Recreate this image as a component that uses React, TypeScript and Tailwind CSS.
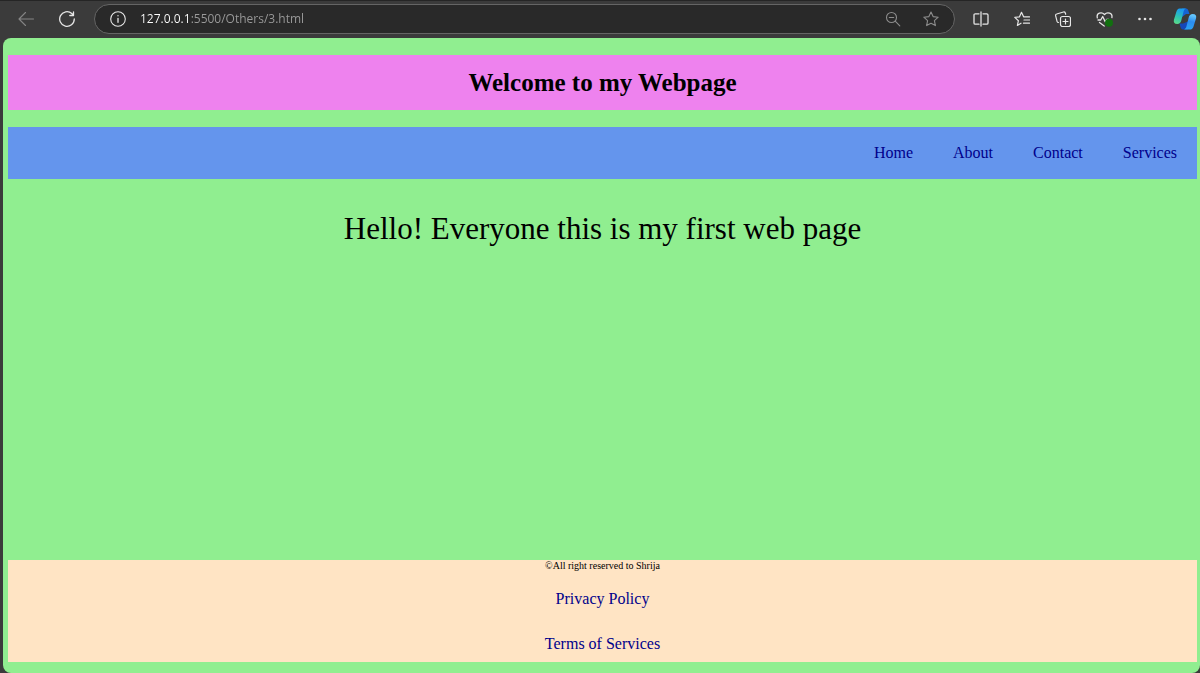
import type { ReactNode } from "react";

const navLinks = ["Home", "About", "Contact", "Services"];
const footerLinks = ["Privacy Policy", "Terms of Services"];

function IconButton({ label, className = "", children }: { label: string; className?: string; children: ReactNode }) {
  return (
    <button type="button" aria-label={label} className={`flex size-6 shrink-0 items-center justify-center ${className}`}>
      {children}
    </button>
  );
}

function Icon({ children, className = "size-4" }: { children: ReactNode; className?: string }) {
  return (
    <svg
      viewBox="0 0 16 16"
      className={`shrink-0 ${className}`}
      fill="none"
      stroke="currentColor"
      strokeWidth="1.1"
      strokeLinecap="round"
      strokeLinejoin="round"
      aria-hidden="true"
    >
      {children}
    </svg>
  );
}

function CopilotLogo() {
  return (
    <svg viewBox="0 0 24 22" className="h-[22px] w-6" aria-hidden="true">
      <defs>
        <linearGradient id="copilot-left" x1="0" y1="1" x2="0.3" y2="0">
          <stop offset="0" stopColor="#62dc84" />
          <stop offset="0.5" stopColor="#30c5ae" />
          <stop offset="1" stopColor="#1b9cf0" />
        </linearGradient>
        <linearGradient id="copilot-right" x1="0" y1="1" x2="0.2" y2="0">
          <stop offset="0" stopColor="#2ba6f5" />
          <stop offset="0.6" stopColor="#2b8cf0" />
          <stop offset="1" stopColor="#63c4fb" />
        </linearGradient>
      </defs>
      <path d="M9 .5h4c1.500 0 2 1 2.500 2.500L16.500 6H13L9 9z" fill="#1563d4" />
      <path d="M15 21.500H10C8.500 21.500 8 20.500 7.500 19L6.500 15.500H10l5-2z" fill="#1548ba" />
      <path d="M6.500 .5H13c-1.300.4-2 1.500-2.500 3.200L8.300 12.500c-.6 2.300-1.800 3.500-4 3.500C1.300 16 .2 14.200 1 11.500L3.300 4C4 1.700 4.900.5 6.500.5z" fill="url(#copilot-left)" />
      <path d="M17.500 21.500H11c1.300-.4 2-1.500 2.500-3.200L15.700 9.500c.6-2.300 1.800-3.500 4-3.500 3 0 4.100 1.800 3.300 4.500L20.700 18c-.7 2.300-1.600 3.500-3.200 3.500z" fill="url(#copilot-right)" />
    </svg>
  );
}

function BrowserBar() {
  return (
    <header className="flex h-[38px] shrink-0 items-center border-t border-[#252525] pb-px text-[#e6e6e6]">
      <IconButton label="Back" className="ml-[14px] text-[#858585]">
        <Icon>
          <path d="M15.500 8H1M7.500 1.500 1 8l6.500 6.500" />
        </Icon>
      </IconButton>
      <IconButton label="Refresh" className="ml-[17px]">
        <Icon>
          <path strokeWidth="1.300" d="M15.300 8A7.300 7.300 0 1 1 12.800 2.500L14.300 4.300M14.500.8v3.700h-3.700" />
        </Icon>
      </IconButton>
      <div className="ml-[15px] flex h-[30px] min-w-0 flex-1 items-center rounded-full border border-[#656565] bg-[#292929] px-[11px]">
        <IconButton label="Site information">
          <Icon>
            <circle cx="8" cy="8" r="7.300" />
            <path strokeWidth="1.300" d="M8 7.300v4M8 4.600v.2" />
          </Icon>
        </IconButton>
        <input
          type="text"
          aria-label="Address"
          defaultValue="127.0.0.1:5500/Others/3.html"
          spellCheck={false}
          className="ml-[10px] min-w-0 flex-1 bg-[linear-gradient(to_right,#ffffff_50px,#9b9b9b_50px)] bg-clip-text font-['Open_Sans','Noto_Sans',sans-serif] text-xs leading-5 text-transparent caret-white outline-none"
        />
        <IconButton label="Zoom out" className="text-[#8c8c8c]">
          <Icon>
            <circle cx="6.500" cy="6.500" r="5" />
            <path d="M4.300 6.500h4.400M10.200 10.200l4.600 4.600" />
          </Icon>
        </IconButton>
        <IconButton label="Add to favorites" className="ml-[14px] text-[#8c8c8c]">
          <Icon>
            <path d="m8 1 2.100 4.600 5.100.6-3.800 3.400 1 5L8 12.200l-4.400 2.400 1-5L.8 6.200l5.100-.6z" />
          </Icon>
        </IconButton>
      </div>
      <div className="flex items-center gap-[17px] pl-[14px]">
        <IconButton label="Split screen">
          <Icon>
            <path strokeWidth="1.300" d="M6 2.800H2.200Q1 2.800 1 4v8q0 1.200 1.200 1.200H6M10 2.800h3.800Q15 2.800 15 4v8q0 1.200-1.200 1.200H10M8 1v14" />
          </Icon>
        </IconButton>
        <IconButton label="Favorites">
          <Icon>
            <path strokeWidth="1.200" d="M7 12.200 3.400 14.400l1-4.700L.8 6.400l4.700-.6L7.500 1.300l2.100 4.500H15.500M10 9h5.500M9.500 12.200h6" />
          </Icon>
        </IconButton>
        <IconButton label="Collections">
          <Icon>
            <rect x="5.500" y="5.500" width="10" height="10" rx="2" strokeWidth="1.200" />
            <path strokeWidth="1.200" d="M10.500 8v5M8 10.500h5M3.500 11.500Q2.400 11.400 2 10.200L.6 4.700Q.4 3.300 1.700 3L8.500 1q1.400-.2 1.800 1l.4 1.300" />
          </Icon>
        </IconButton>
        <IconButton label="Browser essentials">
          <Icon className="h-4 w-[17px] overflow-visible">
            <path strokeWidth="1.300" d="M.8 6.800C-.3 2.200 5 .2 8 3.500c3-3.300 8.300-1.300 7.400 3M1.500 9h2.700l2-3.500 2.500 5.300 1.500-2.500h2M3 11.500 7.700 15" />
            <circle cx="12.500" cy="11.800" r="4" fill="#11700f" stroke="none" />
          </Icon>
        </IconButton>
        <IconButton label="Settings and more">
          <Icon>
            <g fill="currentColor" stroke="none">
              <circle cx="2.500" cy="8" r="1.300" />
              <circle cx="8" cy="8" r="1.300" />
              <circle cx="13.500" cy="8" r="1.300" />
            </g>
          </Icon>
        </IconButton>
      </div>
      <IconButton label="Copilot" className="mr-[3px] ml-4">
        <CopilotLogo />
      </IconButton>
    </header>
  );
}

export default function App() {
  return (
    <div className="flex min-h-screen flex-col bg-[#3b3b3b]">
      <BrowserBar />
      <div className="ml-[3px] flex flex-1 flex-col rounded-lg bg-[#90ee90] pt-[17px] pr-[3px] pb-[11px] pl-[5px] font-['Liberation_Serif','Times_New_Roman',serif] text-base text-black">
        <h1 className="bg-[#ee82ee] py-3 text-center text-[25px] leading-[31px] font-bold">Welcome to my Webpage</h1>
        <nav aria-label="Main" className="mt-[17px] bg-[#6495ed] px-5 py-4">
          <ul className="flex justify-end gap-10 leading-5">
            {navLinks.map((link) => (
              <li key={link}>
                <a href="#" className="text-[#00008b]">{link}</a>
              </li>
            ))}
          </ul>
        </nav>
        <main className="py-8 text-center">
          <p className="text-[31px] leading-9">Hello! Everyone this is my first web page</p>
        </main>
        <footer className="mt-auto flex flex-col items-center bg-[#ffe4c4] pb-2">
          <p className="text-[10px] leading-3">©All right reserved to Shrija</p>
          <ul className="mt-[17px] flex flex-col items-center gap-[25px] leading-5">
            {footerLinks.map((link) => (
              <li key={link}>
                <a href="#" className="text-[#00008b]">{link}</a>
              </li>
            ))}
          </ul>
        </footer>
      </div>
    </div>
  );
}
